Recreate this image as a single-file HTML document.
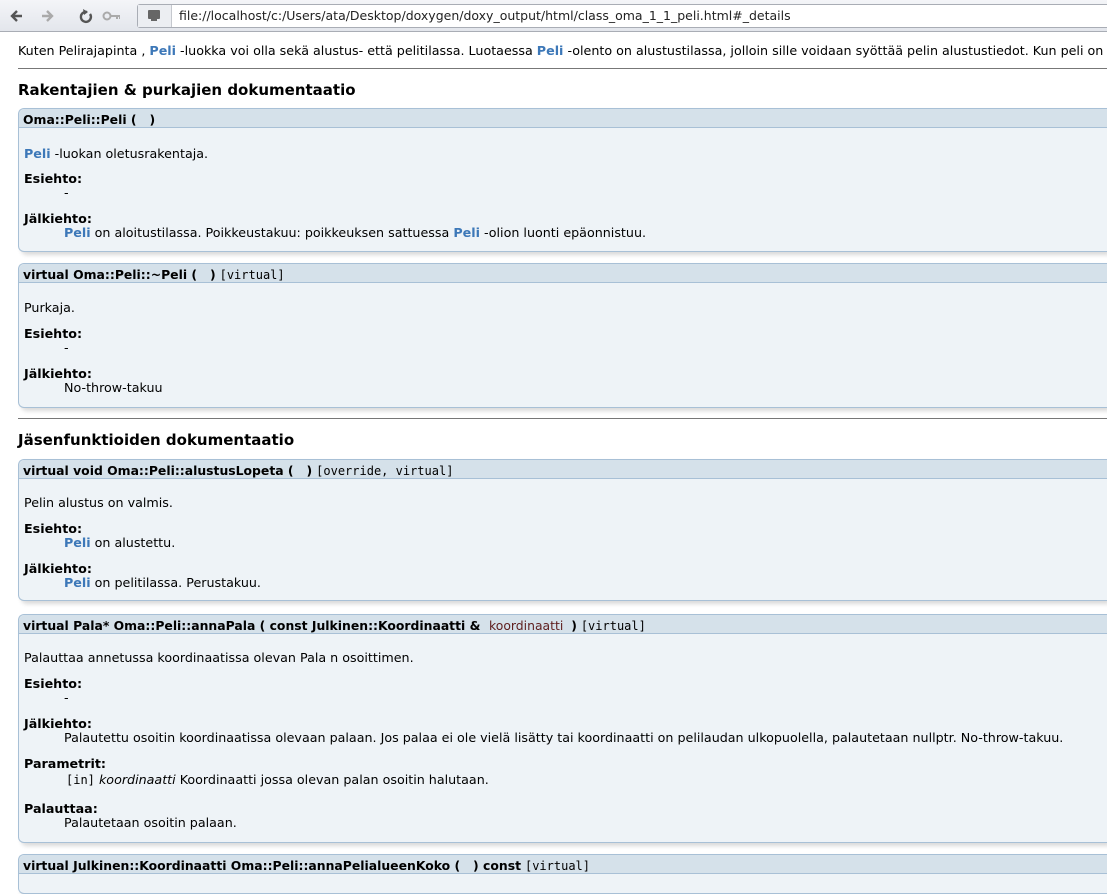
<!DOCTYPE html>
<html><head><meta charset="utf-8"><style>
body{margin:0;width:1107px;height:885px;overflow:hidden;background:#fff;font-family:"DejaVu Sans","Liberation Sans",sans-serif;font-size:12.7px;color:#000;position:relative}
.t{position:absolute;line-height:16px;white-space:nowrap;margin-top:2px}
a{color:#3d78b8;font-weight:bold;text-decoration:none}
b{font-weight:bold}
.mono{font-family:"DejaVu Sans Mono","Liberation Mono",monospace;font-size:12px}
.box{position:absolute;left:18px;width:1089px;border:1px solid #a8c0d6;border-right:none;border-radius:6px 0 0 6px;background:#eef3f7;box-shadow:3px 3px 4px rgba(0,0,0,0.15);box-sizing:border-box}
.hd{position:absolute;left:0;top:0;right:0;height:18px;background:#d5e1ea;border-bottom:1px solid #a8c0d6;border-radius:6px 0 0 0}
.hr{position:absolute;left:18px;right:0;height:0;border-top:1px solid #777}
h2{position:absolute;margin:0;font-size:15px;font-weight:bold;left:18px;line-height:18px;white-space:nowrap;margin-top:1px}
.pn{color:#602020}
.hb{font-size:12.4px}
</style></head><body>
<div style="position:absolute;left:0;top:0;width:1107px;height:31px;background:linear-gradient(#f4f5f8,#e3e6ec);border-bottom:1px solid #a9adb5"></div>
<svg style="position:absolute;left:10px;top:7px" width="110" height="18">
<path d="M12 9H3M7 4L2 9l5 5" stroke="#555" stroke-width="2.4" fill="none"/>
<path d="M32 9h9M37 4l5 5-5 5" stroke="#aaa" stroke-width="2.4" fill="none"/>
<path d="M77 5a5 5 0 1 0 3 2" stroke="#555" stroke-width="2.4" fill="none"/><path d="M73 2l5 3-4 3z" fill="#555"/>
<circle cx="97" cy="9" r="3.5" stroke="#aaa" stroke-width="2" fill="none"/><path d="M100 9h10M107 9v3M110 9v3" stroke="#aaa" stroke-width="2"/>
</svg>
<div style="position:absolute;left:137px;top:4px;width:980px;height:22px;border:1px solid #a9adb5;border-radius:3px;background:#fff"></div>
<div style="position:absolute;left:138px;top:5px;width:33px;height:22px;background:#eceef2;border-right:1px solid #c5c8ce"></div>
<div style="position:absolute;left:148px;top:10px;width:12px;height:9px;background:#666;border-radius:1px"></div>
<div style="position:absolute;left:151px;top:19px;width:6px;height:2px;background:#666"></div>
<div class="t" style="left:179px;top:6px;font-size:12.5px;color:#222">file://localhost/c:/Users/ata/Desktop/doxygen/doxy_output/html/class_oma_1_1_peli.html#_details</div>

<div class="t" style="left:18px;top:41px">Kuten Pelirajapinta , <a>Peli</a> -luokka voi olla sekä alustus- että pelitilassa. Luotaessa <a>Peli</a> -olento on alustustilassa, jolloin sille voidaan syöttää pelin alustustiedot. Kun peli on alustettu</div>
<div class="hr" style="top:68px"></div>
<h2 style="top:80px">Rakentajien &amp; purkajien dokumentaatio</h2>

<div class="box" style="top:108px;height:144px"><div class="hd"></div></div>
<div class="t hb" style="left:23px;top:110px"><b>Oma::Peli::Peli (&nbsp;&nbsp;&nbsp;)</b></div>
<div class="t" style="left:24px;top:144px"><a>Peli</a> -luokan oletusrakentaja.</div>
<div class="t" style="left:24px;top:169px"><b>Esiehto:</b></div>
<div class="t" style="left:64px;top:183px">-</div>
<div class="t" style="left:24px;top:209px"><b>Jälkiehto:</b></div>
<div class="t" style="left:64px;top:223px"><a>Peli</a> on aloitustilassa. Poikkeustakuu: poikkeuksen sattuessa <a>Peli</a> -olion luonti epäonnistuu.</div>

<div class="box" style="top:263px;height:145px"><div class="hd"></div></div>
<div class="t hb" style="left:23px;top:265px"><b>virtual Oma::Peli::~Peli (&nbsp;&nbsp;&nbsp;)</b> <span class="mono">[virtual]</span></div>
<div class="t" style="left:24px;top:298px">Purkaja.</div>
<div class="t" style="left:24px;top:324px"><b>Esiehto:</b></div>
<div class="t" style="left:64px;top:338px">-</div>
<div class="t" style="left:24px;top:364px"><b>Jälkiehto:</b></div>
<div class="t" style="left:64px;top:378px">No-throw-takuu</div>

<div class="hr" style="top:418px"></div>
<h2 style="top:430px">Jäsenfunktioiden dokumentaatio</h2>

<div class="box" style="top:459px;height:142px"><div class="hd"></div></div>
<div class="t hb" style="left:23px;top:461px"><b>virtual void Oma::Peli::alustusLopeta (&nbsp;&nbsp;&nbsp;)</b> <span class="mono">[override, virtual]</span></div>
<div class="t" style="left:24px;top:493px">Pelin alustus on valmis.</div>
<div class="t" style="left:24px;top:519px"><b>Esiehto:</b></div>
<div class="t" style="left:64px;top:533px"><a>Peli</a> on alustettu.</div>
<div class="t" style="left:24px;top:559px"><b>Jälkiehto:</b></div>
<div class="t" style="left:64px;top:573px"><a>Peli</a> on pelitilassa. Perustakuu.</div>

<div class="box" style="top:614px;height:229px"><div class="hd"></div></div>
<div class="t hb" style="left:23px;top:616px"><b>virtual Pala* Oma::Peli::annaPala ( const Julkinen::Koordinaatti &amp;&nbsp; </b> <span class="pn">koordinaatti</span>&nbsp; <b>)</b> <span class="mono">[virtual]</span></div>
<div class="t" style="left:24px;top:648px">Palauttaa annetussa koordinaatissa olevan Pala n osoittimen.</div>
<div class="t" style="left:24px;top:674px"><b>Esiehto:</b></div>
<div class="t" style="left:64px;top:688px">-</div>
<div class="t" style="left:24px;top:714px"><b>Jälkiehto:</b></div>
<div class="t" style="left:64px;top:728px">Palautettu osoitin koordinaatissa olevaan palaan. Jos palaa ei ole vielä lisätty tai koordinaatti on pelilaudan ulkopuolella, palautetaan nullptr. No-throw-takuu.</div>
<div class="t" style="left:24px;top:754px"><b>Parametrit:</b></div>
<div class="t" style="left:66px;top:770px"><span class="mono">[in]</span> <i>koordinaatti</i> Koordinaatti jossa olevan palan osoitin halutaan.</div>
<div class="t" style="left:24px;top:799px"><b>Palauttaa:</b></div>
<div class="t" style="left:64px;top:813px">Palautetaan osoitin palaan.</div>

<div class="box" style="top:854px;height:40px"><div class="hd"></div></div>
<div class="t hb" style="left:23px;top:856px"><b>virtual Julkinen::Koordinaatti Oma::Peli::annaPelialueenKoko (&nbsp;&nbsp;&nbsp;) const</b> <span class="mono">[virtual]</span></div>
</body></html>
